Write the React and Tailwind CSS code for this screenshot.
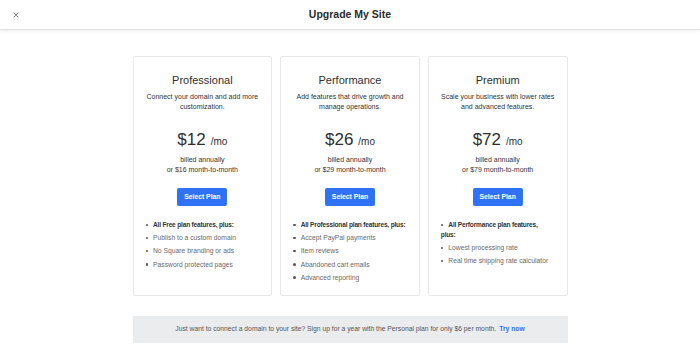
import { X } from 'lucide-react';

// Upgrade modal – three plan cards and a banner for the Personal plan

const PLANS = [
  {
    name: 'Professional',
    desc: ['Connect your domain and add more', 'customization.'],
    price: '$12',
    monthly: '$16',
    lead: 'All Free plan features, plus:',
    features: ['Publish to a custom domain', 'No Square branding or ads', 'Password protected pages'],
  },
  {
    name: 'Performance',
    desc: ['Add features that drive growth and', 'manage operations.'],
    price: '$26',
    monthly: '$29',
    lead: 'All Professional plan features, plus:',
    features: ['Accept PayPal payments', 'Item reviews', 'Abandoned cart emails', 'Advanced reporting'],
  },
  {
    name: 'Premium',
    desc: ['Scale your business with lower rates', 'and advanced features.'],
    price: '$72',
    monthly: '$79',
    lead: 'All Performance plan features,\nplus:',
    features: ['Lowest processing rate', 'Real time shipping rate calculator'],
  },
];

function Dot() {
  return <span className="inline-block w-[2.5px] h-[2.5px] rounded-full bg-[#555] align-middle mr-[5px] -mt-[1px]" />;
}

function PlanCard({ plan }) {
  return (
    <div className="h-[240px] border border-[#e8e8e8] rounded-[2px] bg-white px-[11px] pt-4 flex flex-col">
      <h2 className="text-center text-[11px] leading-[14px] text-[#2f2f2f]">{plan.name}</h2>
      <p className="mt-[5px] text-center text-[7px] leading-[10px] text-[#333]">
        {plan.desc[0]}
        <br />
        {plan.desc[1]}
      </p>
      <div className="mt-[18px] flex items-baseline justify-center gap-[5px] leading-[20px] text-[#2f2f2f]">
        <span className="text-[17px]">{plan.price}</span>
        <span className="text-[10px]">/mo</span>
      </div>
      <p className="mt-[3px] text-center text-[7px] leading-[10px] text-[#333]">
        billed annually
        <br />
        or {plan.monthly} month-to-month
      </p>
      <div className="mt-[13px] flex justify-center">
        <button className="h-[18px] w-[50px] rounded-[2px] bg-[#2f72f5] text-white text-[6.8px] font-bold">
          Select Plan
        </button>
      </div>
      <ul className="mt-[14px] space-y-[3.2px] text-[6.75px] leading-[10px] text-[#6a6a6a]">
        <li className="pl-[1px] font-bold text-[6.6px] tracking-[-0.2px] text-[#333] whitespace-pre-line">
          <Dot />
          {plan.lead}
        </li>
        {plan.features.map((f) => (
          <li key={f} className="pl-[1px]">
            <Dot />
            {f}
          </li>
        ))}
      </ul>
    </div>
  );
}

export default function App() {
  return (
    <div className="w-[700px] h-[346px] bg-white overflow-hidden" style={{ fontFamily: '"Liberation Sans", Arial, sans-serif' }}>
      {/* Header */}
      <header className="relative h-[30px] flex items-center justify-center border-b border-[#e2e2e2] shadow-[0_1px_3px_rgba(0,0,0,0.08)]">
        <button className="absolute left-[12px] top-[11px] text-[#777]">
          <X size={8} strokeWidth={2.5} />
        </button>
        <h1 className="text-[10.5px] font-bold text-[#2b2b2b]">Upgrade My Site</h1>
      </header>

      <main className="w-[435px] mx-auto pt-[26px]">
        <div className="grid grid-cols-3 gap-2">
          {PLANS.map((p) => (
            <PlanCard key={p.name} plan={p} />
          ))}
        </div>

        <div className="mt-[20px] h-[27px] bg-[#ebecee] flex items-center justify-center text-[6.75px] text-[#555]">
          Just want to connect a domain to your site? Sign up for a year with the Personal plan for only $6 per month.
          <a className="ml-[3px] font-bold text-[#2f72f5]">Try now</a>
        </div>
      </main>
    </div>
  );
}
